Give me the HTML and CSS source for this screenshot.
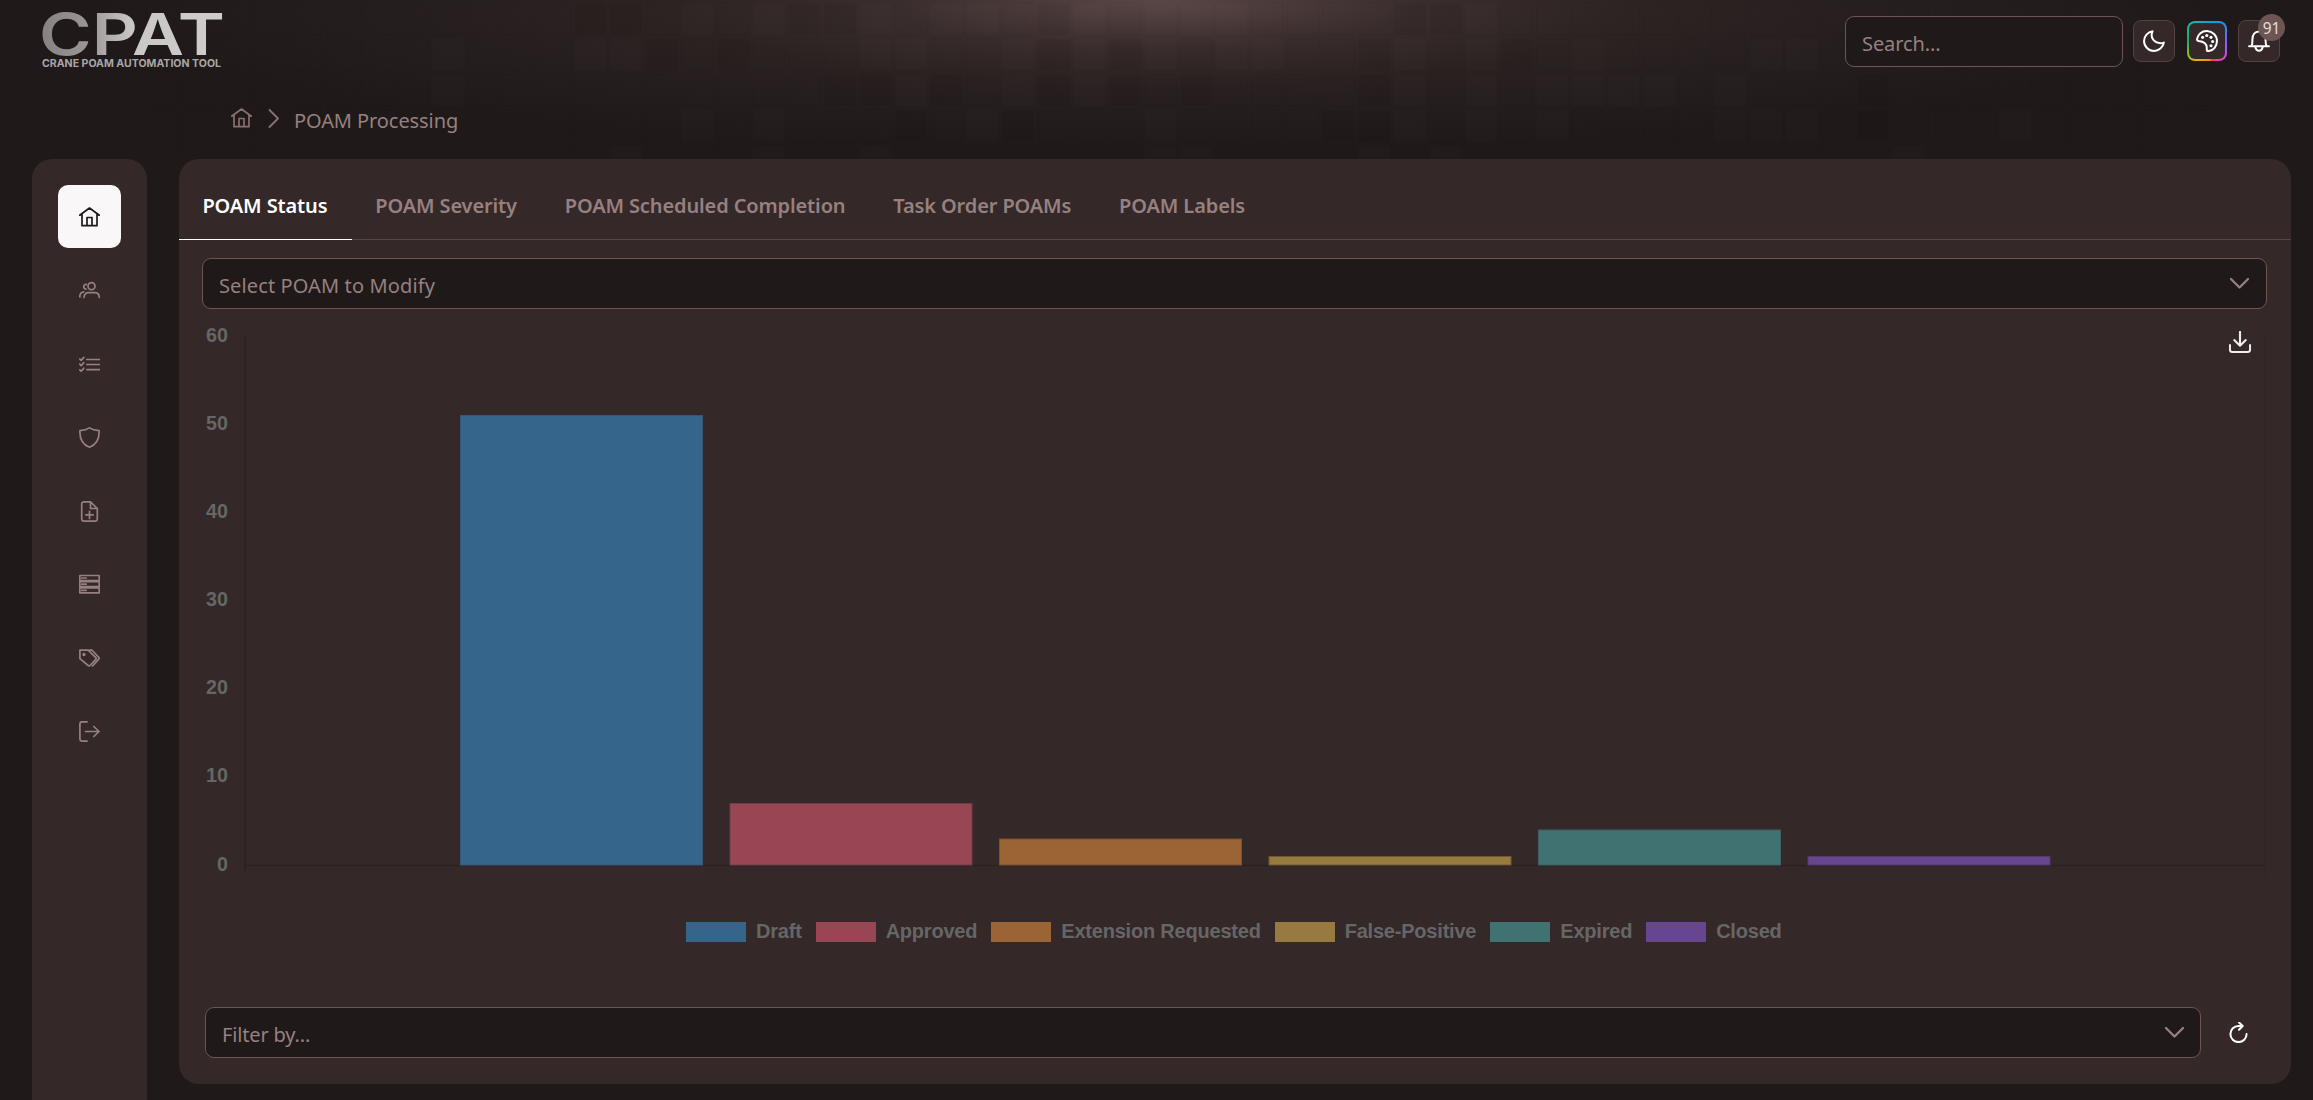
FILE: index.html
```html
<!DOCTYPE html>
<html lang="en">
<head>
<meta charset="utf-8">
<title>CPAT - POAM Processing</title>
<link rel="stylesheet" href="styles.css">
</head>
<body>
<div class="backdrop"><svg class="tiles" id="tiles" width="2313" height="159" aria-hidden="true"></svg></div>
<div class="app">
  <header class="topbar">
    <svg class="logo" width="184" height="60" viewBox="0 0 184 60" role="img">
      <defs><linearGradient id="silver" gradientUnits="userSpaceOnUse" x1="0" x2="182" y1="0" y2="0"><stop offset="0" stop-color="#858280"/><stop offset=".25" stop-color="#999695"/><stop offset=".5" stop-color="#cac8c7"/><stop offset="1" stop-color="#cfcdcc"/></linearGradient></defs>
      <text class="logo-name" x="-3" y="47" textLength="186" lengthAdjust="spacingAndGlyphs" fill="url(#silver)">CPAT</text>
      <text class="logo-sub" x="0" y="58.800" textLength="179" lengthAdjust="spacingAndGlyphs">CRANE POAM AUTOMATION TOOL</text>
    </svg>
    <div class="tools">
      <div class="search">Search...</div>
      <button class="tool moon"><svg class="icon" viewBox="0 0 21 21"><path d="M9.2 1.2C4.5 2 1 5.700 1 10.500a9.500 9.500 0 0 0 9.500 9.500c4.700 0 8.600-3.400 9.400-8-1.400.5-3 .7-4.400.5C11 12 8 8 8.200 4.500c.1-1.200.4-2.200 1-3.300Z"/></svg></button>
      <button class="tool palette"><svg class="icon" viewBox="0 0 21 21"><path d="M10.500 1C5.500.8 1.800 4.200 1 8.500c-.2 1.200.5 1.800 1.500 2C7 11 10.300 13 10.300 17v2c0 1 .8 1.300 1.700 1.100C16.700 19.600 20 15.500 20 10.500 20 5.200 15.800 1.200 10.500 1Z"/><g class="dots"><circle cx="6.300" cy="7" r="1.500"/><circle cx="10.300" cy="5.300" r="1.500"/><circle cx="14.300" cy="7" r="1.500"/><circle cx="15.900" cy="11" r="1.500"/><circle cx="14.300" cy="15" r="1.500"/></g></svg></button>
      <button class="tool bell"><svg class="icon" viewBox="0 0 21 21"><path d="M1 15.500h19M3.200 15.500c1.200-1.500 1-3.500 1-6.500C4.200 4.500 6.500 1.500 10.500 1.500S16.800 4.500 16.800 9c0 3-.2 5 1 6.500M7 16.500c.4 2 1.700 3.200 3.500 3.200s3.100-1.200 3.500-3.200"/></svg><span class="badge">91</span></button>
    </div>
  </header>
  <nav class="crumbs">
    <svg class="icon" viewBox="0 0 21 21"><path d="M.7 8.200 10.500 1l9.800 7.200M3 7v11.700h15V7M8 18.500V10.500h5v8"/></svg>
    <svg class="icon sep" viewBox="0 0 12 21"><path d="m1.500 2 8.500 8.500L1.500 19"/></svg>
    <span>POAM Processing</span>
  </nav>
  <div class="body">
    <aside class="sidebar">
      <a class="nav active"><svg class="icon" viewBox="0 0 21 21"><path d="M.7 8.200 10.500 1l9.800 7.200M3 7v11.700h15V7M8 18.500V10.500h5v8"/></svg></a>
      <a class="nav"><svg class="icon" viewBox="0 0 21 21"><circle cx="12.500" cy="6.200" r="3.500"/><path d="M5 17.500c0-3.300 2-4.800 4.500-4.800h6.200c2.600 0 4.500 1.600 4.500 4.800M7.300 4.300C4.200 4 3.700 8.500 6.900 9.200M.8 17c0-3 1.400-5 4-5.200"/></svg></a>
      <a class="nav"><svg class="icon" viewBox="0 0 21 21"><path d="M7.800 5.500h12.700M7.800 10.500h12.700M7.800 15.600h12.700M.8 5l1.400 1.400 2.600-3M.8 10.200l1.400 1.400 2.600-3M.8 15.800l1.400 1.400 2.600-3"/></svg></a>
      <a class="nav"><svg class="icon" viewBox="0 0 21 21"><path d="M10.500.9C8 2.500 4.500 3.400.9 3.700.6 11 3.500 17.500 10.500 20.200 17.500 17.500 20.400 11 20.100 3.700 16.500 3.400 13 2.500 10.500.9Z"/></svg></a>
      <a class="nav"><svg class="icon" viewBox="0 0 21 21"><path d="M11.500.8H5C3.500.8 2.700 1.700 2.700 3v15c0 1.300.8 2.200 2.300 2.200h11c1.500 0 2.300-.9 2.300-2.200V7.500L11.500.8v6.700h6.800M10.500 10.300v7.200M6.900 13.900h7.200"/></svg></a>
      <a class="nav"><svg class="icon" viewBox="0 0 21 21"><path d="M.8 1.500h19.400v5H.8zM.8 7.700h19.400v5H.8zM.8 13.900h19.400v5H.8zM2.800 4h1.600M5.600 4h1.600M2.800 10.200h1.600M5.600 10.200h1.600M2.800 16.400h1.600M5.600 16.400h1.600"/></svg></a>
      <a class="nav"><svg class="icon" viewBox="0 0 21 21"><path d="M.9 2.200h8.300l7.600 7.500c.6.6.6 1 0 1.600l-5.700 6.200c-.6.600-1.300.6-1.900 0L.9 10.700ZM10.800 2.200h2.400l6.600 7.300c.5.6.5 1 0 1.600L13.600 18"/><circle cx="5" cy="6.500" r=".8"/></svg></a>
      <a class="nav"><svg class="icon" viewBox="0 0 21 21"><path d="M8 .8H3.300C1.700.8.9 1.600.9 3.200v14.600c0 1.600.8 2.400 2.400 2.400H8M6.500 10.500h13.300M14.800 5.500l5.200 5-5.200 5"/></svg></a>
    </aside>
    <main class="card">
      <div class="tabs">
        <div class="tab on">POAM Status</div>
        <div class="tab">POAM Severity</div>
        <div class="tab">POAM Scheduled Completion</div>
        <div class="tab">Task Order POAMs</div>
        <div class="tab">POAM Labels</div>
      </div>
      <div class="select"><span>Select POAM to Modify</span><svg class="icon caret" viewBox="0 0 21 21"><path d="m2 6 8.500 8.500L19 6"/></svg></div>
      <div class="chart">
        <svg width="2067" height="590" viewBox="202 309 2067 590">
          <g class="axis"><path d="M245 336v536M245 865.500h2021"/><path class="faint" d="M2265.500 336v541"/></g>
          <g class="ticks">
            <text x="228" y="341.500">60</text><text x="228" y="429.500">50</text><text x="228" y="517.500">40</text><text x="228" y="605.500">30</text><text x="228" y="693.500">20</text><text x="228" y="782">10</text><text x="228" y="870.500">0</text>
          </g>
          <g class="bars">
            <rect class="draft" x="460.500" y="415.500" width="242" height="449.500"/>
            <rect class="approved" x="730" y="803.500" width="242" height="61.500"/>
            <rect class="extension" x="999.500" y="839" width="242" height="26"/>
            <rect class="falsepos" x="1269" y="856.500" width="242" height="8.500"/>
            <rect class="expired" x="1538.500" y="830" width="242" height="35"/>
            <rect class="closed" x="1808" y="856.500" width="242" height="8.500"/>
          </g>
        </svg>
        <svg class="icon download" viewBox="0 0 21 21"><path d="M10.500.8v13M5 8.700l5.500 5.300L16 8.700M.9 13.500v4.300c0 1.400.8 2.200 2.200 2.200h14.800c1.400 0 2.200-.8 2.200-2.200v-4.300"/></svg>
      </div>
      <div class="legend">
        <div class="key"><i class="draft"></i>Draft</div>
        <div class="key"><i class="approved"></i>Approved</div>
        <div class="key"><i class="extension"></i>Extension Requested</div>
        <div class="key"><i class="falsepos"></i>False-Positive</div>
        <div class="key"><i class="expired"></i>Expired</div>
        <div class="key"><i class="closed"></i>Closed</div>
      </div>
      <div class="filter">
        <div class="select"><span>Filter by...</span><svg class="icon caret" viewBox="0 0 21 21"><path d="m2 6 8.500 8.500L19 6"/></svg></div>
        <svg class="icon refresh" viewBox="0 0 21 21"><path d="M10.500 3.900a8.100 8.100 0 1 0 8.100 8.100M10.500 3.900h4M11 .5l3.700 3.500-3.700 3.700"/></svg>
      </div>
    </main>
  </div>
</div>
<script src="tiles.js"></script>
</body>
</html>
```
FILE: tiles.js
```js
// Header mosaic: columns of lit and shaded squares on a 35.6px grid.
const pitch = 35.625, x0 = 4.8, y0 = 3.3;
const lit = [
  [7, 9, 12, 14, 15, 18, 20, 21, 22, 29],
  [4, 5, 12, 13, 16, 18, 20, 22, 23, 27, 29, 32, 37, 38, 0],
  [13, 16, 18, 27, 29, 31, 32, 33, 34, 36, 0],
  [7, 9, 15, 20, 27, 29, 31, 36, 37, 38, 44],
  [5, 9, 12, 20, 21, 26, 28, 41]
];
const dark = [
  [4, 5, 10, 11, 17, 27, 28],
  [6, 8, 17, 19, 26, 30],
  [11, 12, 14, 17, 19, 21, 26, 40],
  [13, 16, 25, 26, 40],
  []
];
let out = "";
for (let r = 0; r < 5; r++) {
  for (let c = -8; c < 50; c++) {
    const kind = lit[r].includes(c) ? "lit" : dark[r].includes(c) ? "dark" : "plain";
    const x = (x0 + (c + 12) * pitch).toFixed(1);
    const y = (y0 + r * pitch).toFixed(1);
    out += `<rect class="${kind}" x="${x}" y="${y}" width="31.500" height="31.500" rx="2"/>`;
  }
}
document.getElementById("tiles").innerHTML = out;
```
FILE: styles.css
```css
* { box-sizing: border-box; }
body { margin: 0; width: 2313px; height: 1100px; overflow: hidden; background: #1f1919; font-family: "Noto Sans", sans-serif; font-size: 20px; color: #978080; }
.backdrop { position: absolute; left: 0; top: 0; width: 2313px; height: 159px; background: radial-gradient(ellipse 480px 85px at 50% 0, rgba(108,84,84,.62), rgba(80,62,62,.22) 55%, transparent), radial-gradient(ellipse 1080px 150px at 50% 0, #3b2e2e, #2b2222 50%, rgba(31,25,25,0)); }
.tiles { display: block; }
.tiles .lit { fill: rgba(255,235,235,.013); }
.tiles .dark { fill: rgba(0,0,0,.045); }
.tiles .plain { fill: none; stroke: rgba(0,0,0,.035); }
.app { position: relative; height: 1100px; display: flex; flex-direction: column; }
.icon { display: block; width: 21px; height: 21px; flex: none; fill: none; stroke: currentColor; stroke-width: 1.700; stroke-linecap: round; stroke-linejoin: round; }
.topbar { display: flex; justify-content: space-between; height: 83px; padding: 8px 33px 0 42px; }
.logo { overflow: visible; }
.logo-name { font: 600 58px "Inter", sans-serif; }
.logo-sub { font: 700 10.500px "Inter", sans-serif; fill: #a9a7a6; }
.tools { display: flex; align-items: center; align-self: flex-start; height: 68px; margin-top: -1px; }
.search { width: 278px; height: 51px; border: 1px solid #6d5554; border-radius: 9px; background: #1f1919; padding: 0 16px; line-height: 53px; margin-right: 10px; letter-spacing: -.1px; }
.tool { position: relative; width: 42px; height: 42px; padding: 0; border: 1px solid #544141; border-radius: 8px; background: #352828; color: #fff; display: flex; align-items: center; justify-content: center; }
.tool .icon { width: 22px; height: 22px; stroke-width: 1.9; }
.palette { width: 40px; height: 40px; margin: 0 11px 0 12px; border: 2px solid transparent; background: linear-gradient(#352828, #352828) padding-box, conic-gradient(from 0deg, #06a6d4, #3b82f6 60deg, #8b5cf6 95deg, #d946ef 130deg, #f43f5e 165deg, #ff8a0b 172deg, #eab308 205deg, #a4c010 225deg, #22a866 270deg, #14b8a6 325deg, #06a6d4) border-box; }
.palette .dots { fill: #fff; stroke: none; }
.badge { position: absolute; right: -6px; top: -7px; width: 27px; height: 27px; border-radius: 50%; background: #6d5554; color: #e3dcdc; font: 15.500px/28px "Noto Sans", sans-serif; text-align: center; }
.crumbs { display: flex; align-items: center; height: 76px; padding: 0 0 4px 231px; color: #8b7070; }
.crumbs .icon { position: relative; top: -1px; }
.crumbs .sep { width: 12px; margin: 0 14px 0 16px; stroke-width: 1.9; }
.crumbs span { color: #978080; position: relative; top: 1px; letter-spacing: -.08px; }
.body { display: flex; gap: 32px; flex: 1; min-height: 0; padding: 0 22px 0 32px; }
.sidebar { width: 115px; border-radius: 20px 20px 0 0; background: #352828; padding-top: 26px; display: flex; flex-direction: column; align-items: center; gap: 10.500px; }
.nav { width: 63px; height: 63px; padding-top: 1.500px; display: flex; align-items: center; justify-content: center; border-radius: 10px; flex: none; }
.active { background: #f9f7f7; color: #1f1919; }
.card { flex: 1; height: 925px; border-radius: 20px; background: #352828; display: flex; flex-direction: column; }
.tabs { display: flex; height: 81px; border-bottom: 1px solid #564545; flex: none; }
.tab { height: 81px; padding: 0 24.400px 0 23.400px; line-height: 93px; font-weight: 600; letter-spacing: -.12px; white-space: nowrap; }
.on { color: #fff; border-bottom: 1px solid #fff; }
.select { display: flex; align-items: center; justify-content: space-between; height: 51px; margin: 18px 24px 0 23px; padding: 3px 16px 0; border: 1px solid #6d5554; border-radius: 9px; background: #1f1919; flex: none; }
.select span { letter-spacing: .12px; }
.filter .select span { letter-spacing: -.15px; }
.select .caret { stroke-width: 2.300; margin-top: -3px; }
.chart { position: relative; height: 590px; margin-left: 23px; flex: none; }
.download { position: absolute; right: 40px; top: 22px; width: 22px; height: 22px; color: #eee; stroke-width: 2; }
.axis { stroke: #2c2121; stroke-width: 1.500; fill: none; }
.axis .faint { stroke: #302424; }
.ticks { font: bold 19.700px "Liberation Sans", Arial, sans-serif; fill: #666; text-anchor: end; }
.bars rect { stroke-width: 1; }
.draft { fill: #36658b; background: #36658b; stroke: #365878; }
.approved { fill: #984654; background: #984654; stroke: #703b43; }
.extension { fill: #9a6435; background: #9a6435; stroke: #7c5032; }
.falsepos { fill: #977a3f; background: #977a3f; stroke: #705836; }
.expired { fill: #407272; background: #407272; stroke: #3d6161; }
.closed { fill: #66468f; background: #66468f; stroke: #533b6c; }
.legend { display: flex; gap: 14px; height: 22px; margin: 21px 0 0 507px; font: bold 20px/22px "Liberation Sans", Arial, sans-serif; letter-spacing: -.21px; color: #666; }
.key { display: flex; white-space: nowrap; }
.key i { width: 60px; height: 20px; margin: 2px 10px 0 0; }
.filter { display: flex; align-items: center; margin: 65px 42px 0 26px; height: 51px; }
.filter .select { flex: 1; margin: 0; padding-right: 15px; }
.refresh { margin-left: 27px; color: #fff; stroke-width: 2; }
```
